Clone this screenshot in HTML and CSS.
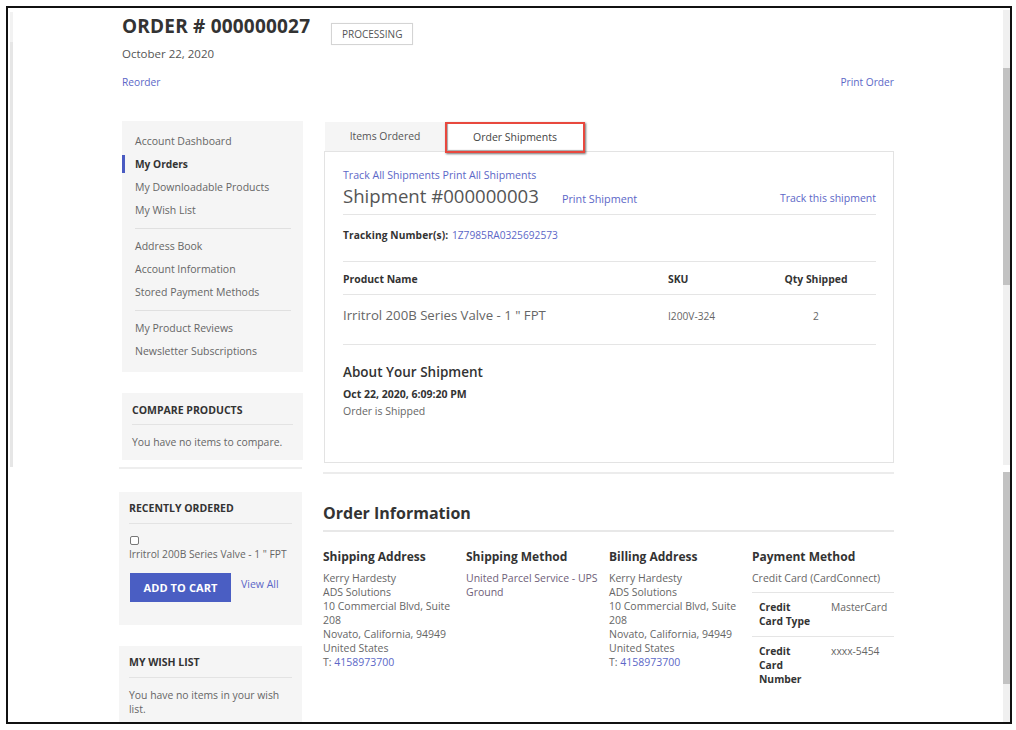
FILE: index.html
```html
<!DOCTYPE html>
<html lang="en">
<head>
<meta charset="utf-8">
<title>Order # 000000027</title>
<link rel="stylesheet" href="styles.css">
</head>
<body>
<div class="frame">
  <div class="strip"><div class="strip-top"></div></div>
  <div class="page">
    <div class="content">
      <div class="header">
        <div class="title-block">
          <h1 class="order-title">ORDER # 000000027</h1>
          <div class="order-date">October 22, 2020</div>
        </div>
        <span class="badge">PROCESSING</span>
      </div>
      <div class="actions">
        <a class="link">Reorder</a>
        <a class="link">Print Order</a>
      </div>

      <div class="columns">
        <aside class="sidebar">
          <nav class="nav-block">
            <a class="nav-item">Account Dashboard</a>
            <a class="nav-item active">My Orders</a>
            <a class="nav-item">My Downloadable Products</a>
            <a class="nav-item">My Wish List</a>
            <div class="nav-divider"></div>
            <a class="nav-item">Address Book</a>
            <a class="nav-item">Account Information</a>
            <a class="nav-item">Stored Payment Methods</a>
            <div class="nav-divider"></div>
            <a class="nav-item">My Product Reviews</a>
            <a class="nav-item">Newsletter Subscriptions</a>
          </nav>

          <div class="block compare">
            <div class="block-title">COMPARE PRODUCTS</div>
            <div class="block-text">You have no items to compare.</div>
          </div>
          <div class="sep-line"></div>

          <div class="block shifted recent">
            <div class="block-title">RECENTLY ORDERED</div>
            <div class="check"></div>
            <div class="block-text">Irritrol 200B Series Valve - 1 " FPT</div>
            <div class="cart-row">
              <button class="btn-cart">ADD TO CART</button>
              <a class="link view-all">View All</a>
            </div>
          </div>

          <div class="block shifted wish">
            <div class="block-title">MY WISH LIST</div>
            <div class="block-text">You have no items in your wish list.</div>
          </div>
        </aside>

        <main class="main">
          <div class="shipments">
            <div class="tabs">
              <div class="tab">Items Ordered</div>
              <div class="tab tab-active">Order Shipments</div>
            </div>
            <div class="panel">
              <div class="track-all"><a class="link">Track All Shipments</a> <a class="link">Print All Shipments</a></div>
              <div class="ship-head">
                <span class="ship-title">Shipment #000000003</span>
                <a class="link print-ship">Print Shipment</a>
                <a class="link track-ship">Track this shipment</a>
              </div>
              <div class="tracking"><span class="strong">Tracking Number(s):</span> <a class="link">1Z7985RA0325692573</a></div>
              <div class="t-row t-head">
                <div class="c-name">Product Name</div>
                <div class="c-sku">SKU</div>
                <div class="c-qty">Qty Shipped</div>
              </div>
              <div class="t-row t-body">
                <div class="c-name prod">Irritrol 200B Series Valve - 1 " FPT</div>
                <div class="c-sku sku">I200V-324</div>
                <div class="c-qty qty">2</div>
              </div>
              <h3 class="about">About Your Shipment</h3>
              <div class="about-date">Oct 22, 2020, 6:09:20 PM</div>
              <div class="about-text">Order is Shipped</div>
            </div>
          </div>

          <h2 class="info-title">Order Information</h2>
          <div class="info-grid">
            <div class="info-col">
              <h4>Shipping Address</h4>
              <div class="addr">Kerry Hardesty<br>ADS Solutions<br>10 Commercial Blvd, Suite 208<br>Novato, California, 94949<br>United States<br>T: <a class="link">4158973700</a></div>
            </div>
            <div class="info-col">
              <h4>Shipping Method</h4>
              <div class="addr method">United Parcel Service - UPS Ground</div>
            </div>
            <div class="info-col">
              <h4>Billing Address</h4>
              <div class="addr">Kerry Hardesty<br>ADS Solutions<br>10 Commercial Blvd, Suite 208<br>Novato, California, 94949<br>United States<br>T: <a class="link">4158973700</a></div>
            </div>
            <div class="info-col pay">
              <h4>Payment Method</h4>
              <div class="addr">Credit Card (CardConnect)</div>
              <div class="pay-table">
                <div class="pay-row"><div class="pay-label">Credit Card Type</div><div class="pay-val">MasterCard</div></div>
                <div class="pay-row"><div class="pay-label">Credit Card Number</div><div class="pay-val">xxxx-5454</div></div>
              </div>
            </div>
          </div>
        </main>
      </div>
    </div>
  </div>
  <div class="scrollbar">
    <div class="sb-track sb-a"></div>
    <div class="sb-thumb sb-b"></div>
    <div class="sb-track sb-c"></div>
    <div class="sb-gap"></div>
    <div class="sb-thumb sb-d"></div>
    <div class="sb-track sb-e"></div>
  </div>
</div>
</body>
</html>
```

FILE: styles.css
```css
* { box-sizing: border-box; }
html, body { margin: 0; padding: 0; background: #fff; }
body {
  font-family: "Open Sans", "Liberation Sans", sans-serif;
  color: #666;
  font-size: 10px;
}
a { text-decoration: none; }
.link { color: #5c67c7; cursor: pointer; }

.frame {
  margin: 6px;
  width: 1006px;
  height: 718px;
  border: 2px solid #111;
  display: flex;
  overflow: hidden;
  background: #fff;
}
.strip {
  margin: 4px 0 0 2px;
  width: 3px;
  height: 455px;
  background: #e6e6e6;
  flex: none;
}
.strip-top { height: 30px; background: #f2f2f2; }

.page { flex: 1; overflow: hidden; }
.content { width: 772px; margin: 0 auto; }

/* header */
.header { display: flex; align-items: flex-start; gap: 21px; padding-top: 6px; }
.order-title {
  margin: 0;
  font-size: 19px;
  line-height: 24px;
  font-weight: 700;
  color: #333;
  letter-spacing: 0.2px;
}
.order-date { margin-top: 8px; font-size: 11.5px; line-height: 16px; color: #555; }
.badge {
  margin-top: 9px;
  width: 82px;
  height: 22px;
  border: 1px solid #d4d4d4;
  font-size: 10px;
  line-height: 20px;
  text-align: center;
  color: #555;
  box-shadow: 0 0 1px rgba(0,0,0,0.08);
}
.actions {
  display: flex;
  justify-content: space-between;
  margin-top: 13px;
  font-size: 10.2px;
  line-height: 14px;
}

.columns { display: flex; gap: 20px; margin-top: 32px; }

/* sidebar */
.sidebar { width: 181px; flex: none; }
.nav-block {
  background: #f5f5f5;
  padding: 11px 0 12px;
  display: flex;
  flex-direction: column;
  gap: 5px;
}
.nav-item {
  display: block;
  line-height: 18px;
  padding-left: 13px;
  font-size: 10.5px;
  color: #666;
}
.nav-item.active {
  border-left: 3px solid #4a5bc2;
  padding-left: 10px;
  font-weight: 700;
  color: #333;
  font-size: 10.2px;
}
.nav-divider { height: 1px; background: #e0e0e0; margin: 3.5px 12px 3.5px 13px; }

.block { background: #f5f5f5; padding: 10px 10px 11px; }
.block.shifted { margin-left: -3px; width: 183px; }
.block-title {
  font-size: 10.5px;
  line-height: 14px;
  font-weight: 700;
  color: #333;
  padding-bottom: 7px;
  border-bottom: 1px solid #e3e3e3;
}
.block-text { font-size: 10.4px; line-height: 14px; color: #666; margin-top: 10px; }
.compare { margin-top: 21px; }
.compare .block-title { padding-top: 0; padding-bottom: 7px; }
.sep-line { margin: 7px 0 0 -3px; width: 183px; height: 2px; background: #eeeeee; }

.recent { margin-top: 23px; padding-bottom: 23px; }
.recent .block-title, .wish .block-title { margin-top: -1px; padding-bottom: 8px; }
.check {
  margin: 12px 0 0 1px;
  width: 9px;
  height: 9px;
  border: 1px solid #777;
  border-radius: 2px;
  background: #fff;
}
.recent .block-text { margin-top: 2px; font-size: 10.25px; }
.cart-row { display: flex; align-items: flex-start; gap: 10px; margin-top: 12px; padding-left: 1px; }
.btn-cart {
  width: 101px;
  height: 29px;
  border: 0;
  background: #4a5ec3;
  color: #fff;
  font-family: inherit;
  font-size: 11px;
  font-weight: 700;
  padding: 0;
  letter-spacing: 0.1px;
}
.view-all { font-size: 10.5px; line-height: 14px; margin-top: 4px; }

.wish { margin-top: 21px; }

/* main */
.main { width: 571px; flex: none; }
.shipments { padding-top: 1px; border-bottom: 2px solid #ececec; padding-bottom: 9px; }
.tabs { display: flex; height: 29px; margin-left: 2px; }
.tab {
  width: 120px;
  height: 29px;
  background: #f5f5f5;
  font-size: 10.4px;
  line-height: 29px;
  text-align: center;
  color: #555;
}
.tab-active {
  position: relative;
  z-index: 1;
  width: 140px;
  height: 31px;
  background: #fff;
  border: 2px solid #e8483e;
  box-shadow: 1px 1px 2px rgba(0,0,0,0.55), inset 1px -1px 1px rgba(0,0,0,0.35);
  line-height: 26px;
  color: #444;
  font-size: 10.5px;
}
.panel {
  margin-left: 1px;
  border: 1px solid #e3e3e3;
  padding: 16px 17px 44px 18px;
}
.track-all { font-size: 10.6px; line-height: 14px; }
.ship-head {
  display: flex;
  align-items: baseline;
  margin-top: 3px;
  padding-bottom: 7px;
  border-bottom: 1px solid #e5e5e5;
}
.ship-title { font-size: 18.6px; line-height: 22px; color: #555; font-weight: 400; }
.print-ship { margin-left: 23px; font-size: 10.8px; }
.track-ship { margin-left: auto; font-size: 10.5px; position: relative; top: -1px; }
.tracking {
  margin-top: 13px;
  line-height: 14px;
  font-size: 10.2px;
  padding-bottom: 19px;
  border-bottom: 1px solid #e5e5e5;
}
.strong { font-weight: 700; color: #333; margin-right: 1px; letter-spacing: 0.1px; }
.t-row { display: flex; border-bottom: 1px solid #e5e5e5; }
.t-head { padding: 10px 0 8px; font-size: 10.4px; line-height: 14px; font-weight: 700; color: #333; }
.t-body { padding: 10px 0 19px; align-items: center; }
.c-name { width: 325px; }
.c-sku { width: 88px; }
.c-qty { width: 120px; text-align: center; }
.prod { font-size: 13.2px; line-height: 18px; color: #666; }
.sku, .qty { font-size: 10.2px; line-height: 18px; color: #666; padding-top: 2px; }
.about { margin: 18px 0 0; font-size: 13.5px; line-height: 18px; font-weight: 600; color: #333; }
.about-date { margin-top: 6px; font-size: 10.5px; line-height: 14px; font-weight: 700; color: #333; }
.about-text { margin-top: 3px; font-size: 10.5px; line-height: 14px; color: #666; }

.info-title {
  margin: 29px 0 0;
  font-size: 16px;
  line-height: 20px;
  font-weight: 700;
  color: #333;
  padding-bottom: 7px;
  border-bottom: 2px solid #e8e8e8;
}
.info-grid { display: grid; grid-template-columns: 143px 143px 143px 142px; margin-top: 17px; }
.info-col { padding-right: 6px; }
.info-col.pay { padding-right: 0; }
.info-col h4 { margin: 0 0 6px; font-size: 12px; line-height: 16px; font-weight: 700; color: #333; }
.addr { font-size: 10.5px; line-height: 14px; color: #666; }
.method { color: #6e6078; }
.pay-table { margin-top: 7px; }
.pay-row {
  display: flex;
  border-top: 1px solid #e5e5e5;
  padding: 7px 0 8px 7px;
  font-size: 10.3px;
  line-height: 14px;
}
.pay-label { width: 72px; font-weight: 700; color: #333; padding-right: 18px; }
.pay-val { color: #666; }

/* scrollbar */
.scrollbar { width: 7px; flex: none; padding-top: 2px; display: flex; flex-direction: column; }
.sb-track { background: #f0f0f0; }
.sb-thumb { background: #c2c2c2; }
.sb-a { height: 58px; }
.sb-b { height: 217px; }
.sb-c { height: 180px; }
.sb-gap { height: 7px; background: #fff; }
.sb-d { height: 212px; }
.sb-e { flex: 1; }
```
